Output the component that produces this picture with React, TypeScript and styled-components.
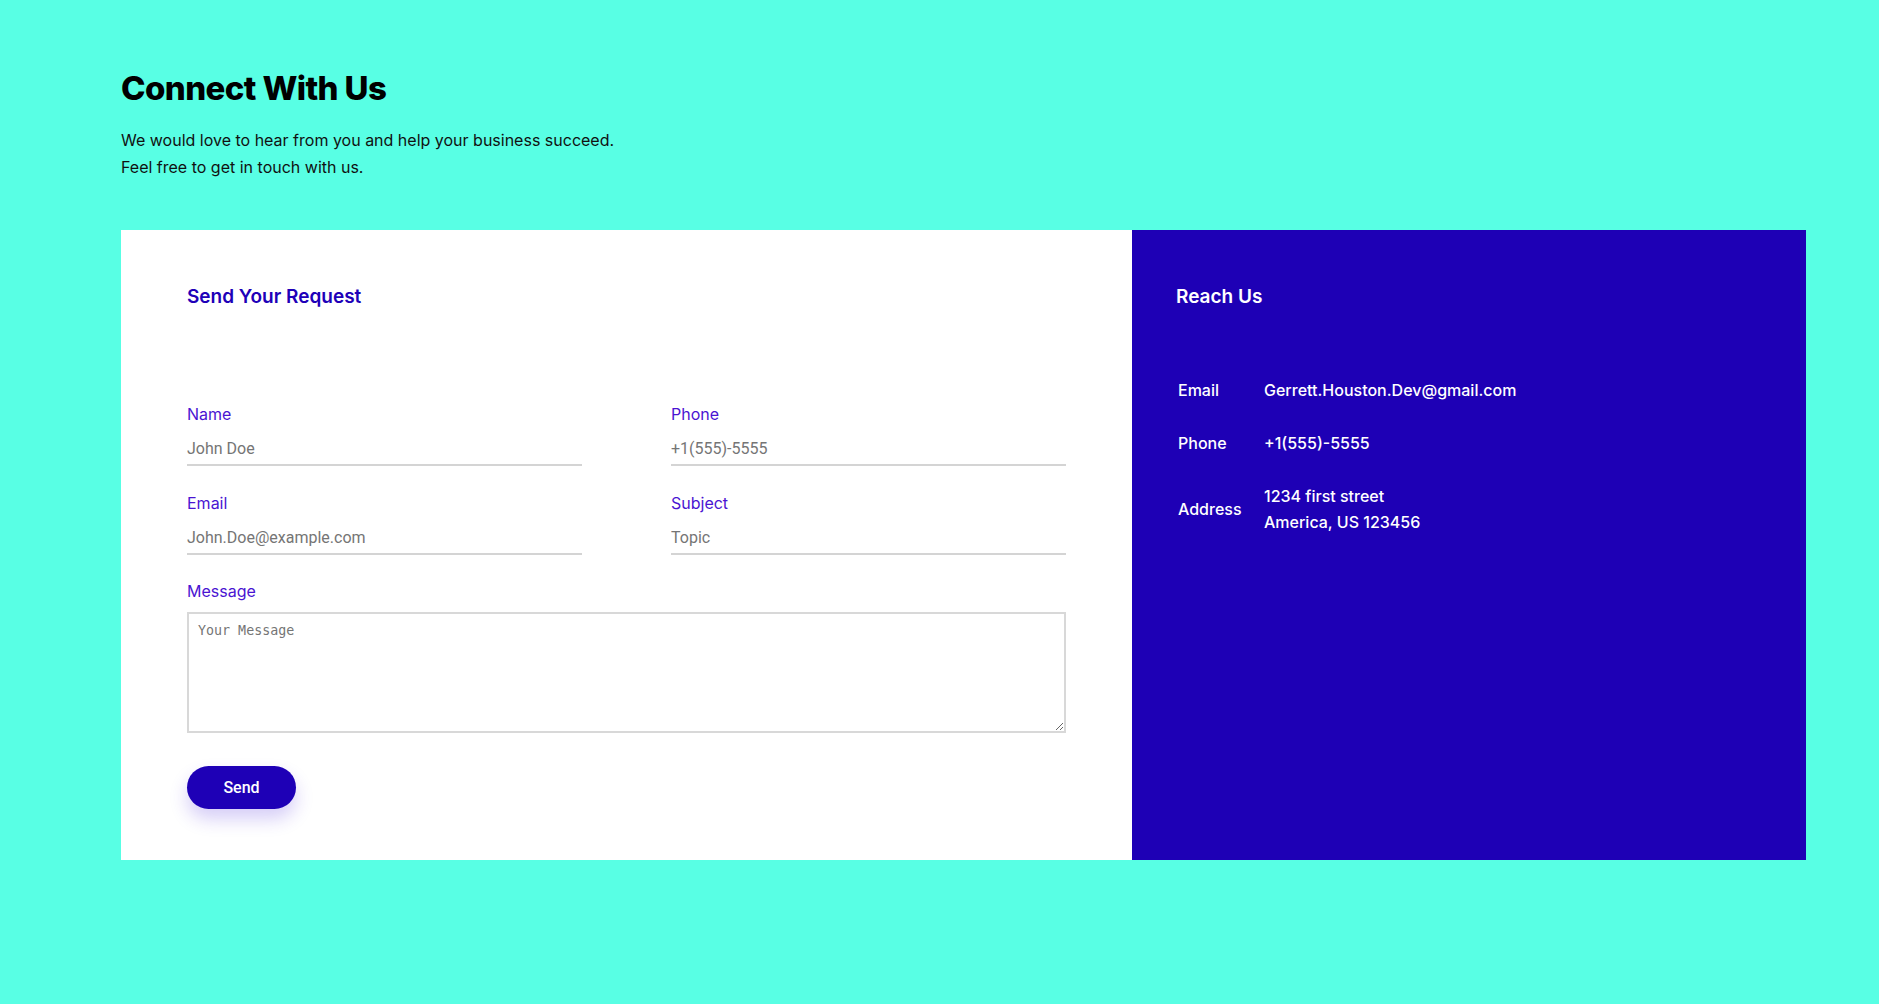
import React from 'react'
import styled, { createGlobalStyle } from 'styled-components'

const GlobalStyle = createGlobalStyle`
  * {
    box-sizing: border-box;
  }
  body {
    margin: 0;
    background: #58ffe4;
    font-family: Inter, 'Noto Sans', sans-serif;
    color: #000;
  }
`

const contactRows = [
  { label: 'Email', value: ['Gerrett.Houston.Dev@gmail.com'] },
  { label: 'Phone', value: ['+1(555)-5555'] },
  { label: 'Address', value: ['1234 first street', 'America, US 123456'] },
]

const fields = [
  { label: 'Name', placeholder: 'John Doe', type: 'text' },
  { label: 'Phone', placeholder: '+1(555)-5555', type: 'tel' },
  { label: 'Email', placeholder: 'John.Doe@example.com', type: 'email' },
  { label: 'Subject', placeholder: 'Topic', type: 'text' },
]

export default function App() {
  return (
    <>
      <GlobalStyle />
      <Page>
        <Header>
          <Title>Connect With Us</Title>
          <Intro>
            We would love to hear from you and help your business succeed.
            <br />
            Feel free to get in touch with us.
          </Intro>
        </Header>

        <Card>
          <FormPanel>
            <PanelTitle>Send Your Request</PanelTitle>
            <Form onSubmit={(e) => e.preventDefault()}>
              <FieldGrid>
                {fields.map((f) => (
                  <Field key={f.label}>
                    <Label>{f.label}</Label>
                    <Input type={f.type} placeholder={f.placeholder} />
                  </Field>
                ))}
              </FieldGrid>
              <Field>
                <Label>Message</Label>
                <TextArea placeholder='Your Message' />
              </Field>
              <SendButton type='submit'>Send</SendButton>
            </Form>
          </FormPanel>

          <InfoPanel>
            <PanelTitle $light>Reach Us</PanelTitle>
            <InfoTable>
              {contactRows.map((row) => (
                <React.Fragment key={row.label}>
                  <InfoLabel>{row.label}</InfoLabel>
                  <InfoValue>
                    {row.value.map((line) => (
                      <div key={line}>{line}</div>
                    ))}
                  </InfoValue>
                </React.Fragment>
              ))}
            </InfoTable>
          </InfoPanel>
        </Card>
      </Page>
    </>
  )
}

const Page = styled.div`
  padding: 67px 73px 144px 121px;
`
const Header = styled.header`
  display: flex;
  flex-direction: column;
  gap: 18px;
`
const Title = styled.h1`
  margin: 0;
  font-size: 33px;
  line-height: 42px;
  font-weight: 800;
  letter-spacing: -0.6px;
`
const Intro = styled.p`
  margin: 0;
  font-size: 16px;
  line-height: 26.5px;
  color: #111;
`
const Card = styled.section`
  margin-top: 50px;
  display: grid;
  grid-template-columns: 1011px 1fr;
  height: 630px;
`
const FormPanel = styled.div`
  background: #fff;
  padding: 55px 66px 50px 66px;
`
const PanelTitle = styled.h2<{ $light?: boolean }>`
  margin: 0;
  font-size: 19px;
  line-height: 24px;
  font-weight: 600;
  color: ${(p) => (p.$light ? '#fff' : '#2000b8')};
`
const Form = styled.form`
  margin-top: 93px;
  display: flex;
  flex-direction: column;
  align-items: flex-start;
`
const FieldGrid = styled.div`
  width: 100%;
  display: grid;
  grid-template-columns: 1fr 1fr;
  column-gap: 89px;
  row-gap: 25px;
  margin-bottom: 24px;
`
const Field = styled.label`
  display: flex;
  flex-direction: column;
  width: 100%;
`
const Label = styled.span`
  font-size: 16px;
  line-height: 24px;
  color: #4a14d2;
`
const Input = styled.input`
  margin-top: 5px;
  border: none;
  border-bottom: 2px solid #d4d4d4;
  padding: 8px 0 5px;
  font-family: Roboto, 'Liberation Sans', sans-serif;
  font-size: 16px;
  line-height: 20px;
  outline: none;
  ::placeholder {
    color: #777;
  }
`
const TextArea = styled.textarea`
  margin-top: 9px;
  height: 121px;
  border: 2px solid #d8d8d8;
  padding: 9px 9px;
  font-family: 'DejaVu Sans Mono', monospace;
  font-size: 13.33px;
  outline: none;
  ::placeholder {
    color: #777;
  }
`
const SendButton = styled.button`
  margin-top: 33px;
  width: 109px;
  height: 43px;
  border: none;
  border-radius: 22px;
  background: #1e00b6;
  color: #fff;
  font-family: Roboto, 'Liberation Sans', sans-serif;
  font-size: 16px;
  font-weight: 500;
  box-shadow: 0 10px 18px rgba(70, 30, 220, 0.22);
  cursor: pointer;
`
const InfoPanel = styled.aside`
  background: #1e00b5;
  padding: 55px 44px;
  color: #fff;
`
const InfoTable = styled.div`
  margin-top: 68px;
  margin-left: 2px;
  display: grid;
  grid-template-columns: 86px 1fr;
  row-gap: 27px;
  align-items: center;
`
const InfoLabel = styled.div`
  font-size: 16px;
  line-height: 26px;
  font-weight: 500;
`
const InfoValue = styled.div`
  font-size: 16px;
  line-height: 26px;
  font-weight: 500;
`
